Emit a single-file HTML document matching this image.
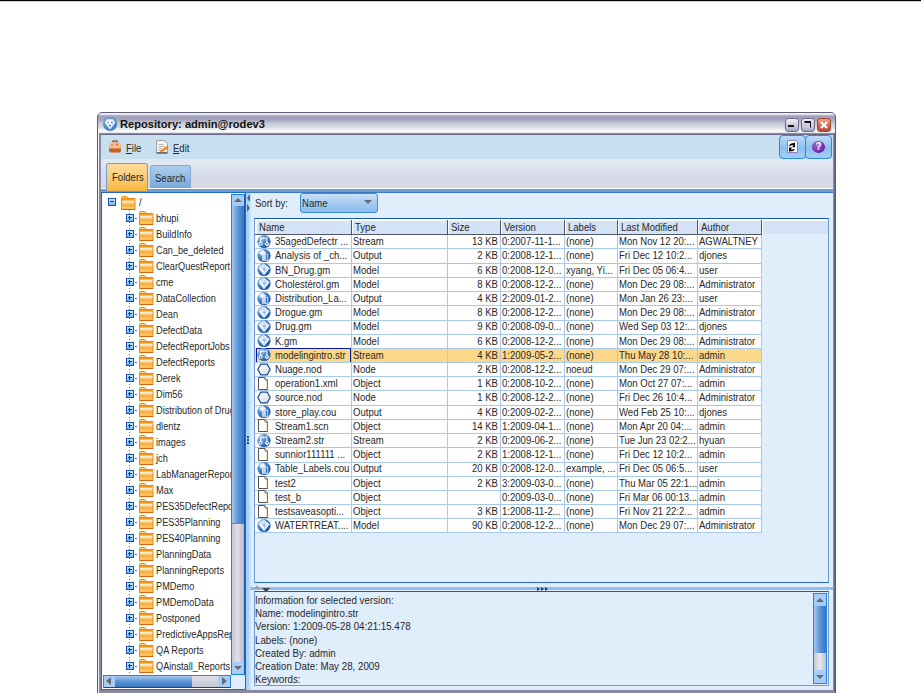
<!DOCTYPE html><html><head><meta charset="utf-8"><style>
*{margin:0;padding:0;box-sizing:border-box}
html,body{width:921px;height:693px;overflow:hidden;background:#fff;position:relative;font-family:"Liberation Sans",sans-serif;font-size:11px;color:#282828}
.a{position:absolute}
.t{position:absolute;white-space:nowrap;line-height:14px;font-size:10px;margin-top:1px;transform-origin:0 0;transform:scaleX(0.955)}
.tt{transform:scaleX(0.92)!important}
.ti{transform:scaleX(0.975)!important}
.tr{position:absolute;white-space:nowrap;line-height:14px;font-size:10px;margin-top:1px;transform-origin:100% 0;transform:scaleX(0.955);text-align:right}
</style></head><body>

<svg width="0" height="0" style="position:absolute"><defs><linearGradient id="fg" x1="0" y1="0" x2="0" y2="1"><stop offset="0" stop-color="#fcb848"/><stop offset=".22" stop-color="#fff8ea"/><stop offset=".42" stop-color="#fdd08a"/><stop offset=".6" stop-color="#f9a63a"/><stop offset=".85" stop-color="#fcd060"/><stop offset="1" stop-color="#fdee98"/></linearGradient><linearGradient id="tg" x1="0" y1="0" x2="0" y2="1"><stop offset="0" stop-color="#fde890"/><stop offset="1" stop-color="#f8b030"/></linearGradient><symbol id="fold" viewBox="0 0 15 14"><path d="M.5 4V1.5Q.5.5 1.5.5H5.5Q6.3.5 6.8 1.5L7.3 2.5" fill="url(#tg)" stroke="#f08c10"/><rect x=".5" y="2.5" width="13.5" height="11" fill="url(#fg)" stroke="#f08a10"/><path d="M1 3.8h12.5" stroke="#fa9a20" stroke-width="1.6"/><path d="M.5 13.3h13.5" stroke="#d85a10" stroke-width="1"/></symbol></defs></svg>
<div class="a" style="left:0;top:0;width:921px;height:1px;background:#000"></div>
<div class="a" style="left:0;top:1px;width:921px;height:1px;background:#d0d0d0"></div>
<div class="a" style="left:97px;top:112px;width:739px;height:600px;background:#8a8aa2;border:1px solid #5c5c78;border-radius:5px 5px 0 0"></div>
<div class="a" style="left:98px;top:113px;width:737px;height:21px;border-radius:4px 4px 0 0;background:linear-gradient(#f4f4f8 0,#f4f4f8 1px,#a29ebb 3px,#a6a6c0 7px,#c4c8d4 10px,#d6dae2 14px,#f4f4f4 17px,#fafafa 18.5px,#e8e8ee 19.5px,#a0a0b8 20.2px,#6a6a88 21px)"></div>
<div class="a" style="left:98px;top:133px;width:1px;height:570px;background:#eeeef4"></div>
<div class="a" style="left:834px;top:133px;width:1px;height:570px;background:#6a6a84"></div>
<div class="a" style="left:101px;top:134px;width:732px;height:1px;background:#6a6a88"></div>
<div class="a" style="left:101px;top:135px;width:732px;height:24px;background:#c8dff0"></div>
<div class="a" style="left:101px;top:159px;width:732px;height:29px;background:linear-gradient(#e0e8f6,#e2e8ee 5px,#dfe0f0 9px,#d8e0ec 13px,#d9dae8 20px,#d8d8e0 29px)"></div>
<div class="a" style="left:101px;top:188px;width:732px;height:1px;background:#fff"></div>
<div class="a" style="left:101px;top:189px;width:732px;height:3px;background:#6c9fd0"></div>
<div class="a" style="left:101px;top:192px;width:732px;height:1px;background:#3a7ac4"></div>
<div class="a" style="left:101px;top:193px;width:732px;height:500px;background:#e0edfb"></div>
<div class="a" style="left:106px;top:163px;width:42px;height:28px;border:1px solid #6a9ed8;border-bottom:none;border-radius:3px 3px 0 0;background:#f0a020"></div>
<div class="a" style="left:107px;top:164px;width:40px;height:27px;border-radius:2px 2px 0 0;background:linear-gradient(#fddc98,#fcd080 40%,#f9bc48 90%,#f4b040)"></div>
<div class="t" style="left:112px;top:169.8px">Folders</div>
<div class="a" style="left:150px;top:165px;width:41px;height:23px;border:1px solid #80aad8;border-bottom:none;border-radius:3px 3px 0 0;background:linear-gradient(#aacdea,#94bce4 50%,#7aa8d8)"></div>
<div class="t" style="left:155px;top:171.2px">Search</div>
<svg class="a" style="left:108px;top:139px" width="14" height="15"><path d="M5 3.5V2h4v1.5" fill="none" stroke="#6a3010" stroke-width="1.2"/><rect x="1" y="3.5" width="12" height="10" rx="2" fill="#f4b884"/><path d="M1 9.5h12v2a2 2 0 0 1-2 2H3a2 2 0 0 1-2-2z" fill="#c0602a"/><rect x="2" y="4.5" width="3" height="3" fill="#fde0c0" opacity=".7"/><circle cx="4" cy="6" r=".8" fill="#d04030"/><circle cx="9" cy="5.5" r=".8" fill="#d04030"/><circle cx="7" cy="8" r=".8" fill="#f0e8e0"/></svg>
<div class="t" style="left:126px;top:140.9px"><u>F</u>ile</div>
<svg class="a" style="left:156px;top:140px" width="13" height="14"><path d="M.5 .5h8l3 3v9h-11z" fill="#f4f4f4" stroke="#a0a0a0"/><path d="M.5 13h11" stroke="#606060" stroke-width="1.5"/><path d="M2.5 4.5h5M2.5 6.5h6M2.5 8.5h3M2.5 10.5h3" stroke="#b8b8b8"/><path d="M4.5 11.5 11.5 7" stroke="#f07010" stroke-width="2.2"/><path d="M5 10.5 11 6.5" stroke="#fcc040" stroke-width=".8"/></svg>
<div class="t" style="left:173px;top:140.9px"><u>E</u>dit</div>
<div class="a" style="left:103px;top:117px;width:14px;height:14px;border-radius:50%;background:radial-gradient(circle at 40% 35%,#8ab8e8,#3a7ac8 70%,#2a5aa8)"></div>
<svg class="a" style="left:103px;top:117px" width="14" height="14"><path d="M4 2.2H10L12.3 5.5 7 12.5 1.8 5.5z" fill="#fff" fill-opacity=".92"/><circle cx="5" cy="5.5" r="1" fill="#7aa8e0"/><circle cx="9" cy="5.5" r="1" fill="#5a90d0"/><circle cx="7" cy="8.6" r="1.1" fill="#4a84cc"/></svg>
<div class="a" style="left:120px;top:116.8px;font-weight:bold;font-size:11.5px;white-space:nowrap;line-height:14px;color:#111;transform-origin:0 0;transform:scaleX(0.967)">Repository: admin@rodev3</div>
<div class="a" style="left:785px;top:118px;width:14px;height:14px;border:1px solid #6c6c88;border-radius:3px;background:linear-gradient(#eeeef6,#c8c8d8 60%,#a8a8c0)"></div>
<div class="a" style="left:801px;top:118px;width:14px;height:14px;border:1px solid #6c6c88;border-radius:3px;background:linear-gradient(#eeeef6,#c8c8d8 60%,#a8a8c0)"></div>
<div class="a" style="left:788px;top:125px;width:6px;height:2px;background:#111"></div>
<div class="a" style="left:804px;top:121px;width:7px;height:7px;border-top:2px solid #111;border-right:1.5px solid #111;border-left:1px solid #c8c8d8;border-bottom:1px solid #c8c8d8"></div>
<div class="a" style="left:817px;top:118px;width:14px;height:14px;border:1px solid #a04830;border-radius:3px;background:linear-gradient(#f0a080,#d86848 60%,#b04838)"></div>
<svg class="a" style="left:817px;top:118px" width="14" height="14"><path d="M4 4 10 10M10 4 4 10" stroke="#fff" stroke-width="2.2"/></svg>
<div class="a" style="left:779px;top:135px;width:27px;height:24px;border:1px solid #2a88e0;border-radius:4px;background:linear-gradient(#bcdaf8,#8cc0f0 55%,#a4cef6)"></div>
<div class="a" style="left:805px;top:135px;width:27px;height:24px;border:1px solid #2a88e0;border-radius:4px;background:linear-gradient(#bcdaf8,#8cc0f0 55%,#a4cef6)"></div>
<svg class="a" style="left:787px;top:140px" width="11" height="13"><path d="M.5 .5h8.5l1.5 1.5v10.5h-10z" fill="#fff" stroke="#8a80b8"/><path d="M2 6.2Q2.6 3.4 5.8 3.3L8 2.6V7.2H5.2L6.6 5.6Q4.2 4.8 2.6 6.6z" fill="#000"/><path d="M2 7.6H5L3.8 9.4Q6.2 9.8 7.8 8.8Q7.6 11.6 4.6 11.2L2 11.6z" fill="#000"/></svg>
<div class="a" style="left:812px;top:141px;width:13px;height:12px;border-radius:50%;background:radial-gradient(circle at 40% 35%,#a070d8,#6a20a8 70%,#501888)"></div>
<div class="a" style="left:812px;top:140px;width:13px;height:13px;color:#fff;font-weight:bold;font-size:10px;line-height:13px;text-align:center">?</div>
<div class="a" style="left:99px;top:193px;width:2px;height:500px;background:#8888a0"></div>
<div class="a" style="left:101px;top:192px;width:145px;height:498px;border:1px solid #1a6ad0;background:#fff"></div>
<div class="a" style="left:102px;top:193px;width:129px;height:482px;overflow:hidden">
<div class="a" style="left:-102px;top:-193px;width:921px;height:693px">
<div class="a" style="left:108px;top:198px;width:8px;height:8px;border:1px solid #1a50b0;background:linear-gradient(#d0e8fc,#7ab8f8)"></div><div class="a" style="left:110px;top:201px;width:4px;height:1px;background:#1a3a90"></div>
<svg class="a" style="left:121px;top:196px" width="15" height="14"><use href="#fold"/></svg>
<div class="t" style="left:139px;top:195px">/</div>
<div class="a" style="left:129px;top:210px;width:1px;height:465px;background:repeating-linear-gradient(#3a7ad8 0,#3a7ad8 1px,transparent 1px,transparent 3px)"></div>
<div class="a" style="left:126px;top:214px;width:8px;height:8px;border:1px solid #1a50b0;background:linear-gradient(#d0e8fc,#7ab8f8)"></div><div class="a" style="left:128px;top:217px;width:4px;height:1px;background:#1a3a90"></div><div class="a" style="left:129px;top:216px;width:1px;height:4px;background:#1a3a90"></div>
<div class="a" style="left:135px;top:218px;width:2px;height:1px;background:#3a7ad8"></div>
<svg class="a" style="left:139px;top:211px" width="15" height="14"><use href="#fold"/></svg>
<div class="t tt" style="left:156px;top:210.9px">bhupi</div>
<div class="a" style="left:126px;top:230px;width:8px;height:8px;border:1px solid #1a50b0;background:linear-gradient(#d0e8fc,#7ab8f8)"></div><div class="a" style="left:128px;top:233px;width:4px;height:1px;background:#1a3a90"></div><div class="a" style="left:129px;top:232px;width:1px;height:4px;background:#1a3a90"></div>
<div class="a" style="left:135px;top:234px;width:2px;height:1px;background:#3a7ad8"></div>
<svg class="a" style="left:139px;top:227px" width="15" height="14"><use href="#fold"/></svg>
<div class="t tt" style="left:156px;top:226.9px">BuildInfo</div>
<div class="a" style="left:126px;top:246px;width:8px;height:8px;border:1px solid #1a50b0;background:linear-gradient(#d0e8fc,#7ab8f8)"></div><div class="a" style="left:128px;top:249px;width:4px;height:1px;background:#1a3a90"></div><div class="a" style="left:129px;top:248px;width:1px;height:4px;background:#1a3a90"></div>
<div class="a" style="left:135px;top:250px;width:2px;height:1px;background:#3a7ad8"></div>
<svg class="a" style="left:139px;top:243px" width="15" height="14"><use href="#fold"/></svg>
<div class="t tt" style="left:156px;top:242.9px">Can_be_deleted</div>
<div class="a" style="left:126px;top:262px;width:8px;height:8px;border:1px solid #1a50b0;background:linear-gradient(#d0e8fc,#7ab8f8)"></div><div class="a" style="left:128px;top:265px;width:4px;height:1px;background:#1a3a90"></div><div class="a" style="left:129px;top:264px;width:1px;height:4px;background:#1a3a90"></div>
<div class="a" style="left:135px;top:266px;width:2px;height:1px;background:#3a7ad8"></div>
<svg class="a" style="left:139px;top:259px" width="15" height="14"><use href="#fold"/></svg>
<div class="t tt" style="left:156px;top:258.9px">ClearQuestReport</div>
<div class="a" style="left:126px;top:278px;width:8px;height:8px;border:1px solid #1a50b0;background:linear-gradient(#d0e8fc,#7ab8f8)"></div><div class="a" style="left:128px;top:281px;width:4px;height:1px;background:#1a3a90"></div><div class="a" style="left:129px;top:280px;width:1px;height:4px;background:#1a3a90"></div>
<div class="a" style="left:135px;top:282px;width:2px;height:1px;background:#3a7ad8"></div>
<svg class="a" style="left:139px;top:275px" width="15" height="14"><use href="#fold"/></svg>
<div class="t tt" style="left:156px;top:274.9px">cme</div>
<div class="a" style="left:126px;top:294px;width:8px;height:8px;border:1px solid #1a50b0;background:linear-gradient(#d0e8fc,#7ab8f8)"></div><div class="a" style="left:128px;top:297px;width:4px;height:1px;background:#1a3a90"></div><div class="a" style="left:129px;top:296px;width:1px;height:4px;background:#1a3a90"></div>
<div class="a" style="left:135px;top:298px;width:2px;height:1px;background:#3a7ad8"></div>
<svg class="a" style="left:139px;top:291px" width="15" height="14"><use href="#fold"/></svg>
<div class="t tt" style="left:156px;top:290.9px">DataCollection</div>
<div class="a" style="left:126px;top:310px;width:8px;height:8px;border:1px solid #1a50b0;background:linear-gradient(#d0e8fc,#7ab8f8)"></div><div class="a" style="left:128px;top:313px;width:4px;height:1px;background:#1a3a90"></div><div class="a" style="left:129px;top:312px;width:1px;height:4px;background:#1a3a90"></div>
<div class="a" style="left:135px;top:314px;width:2px;height:1px;background:#3a7ad8"></div>
<svg class="a" style="left:139px;top:307px" width="15" height="14"><use href="#fold"/></svg>
<div class="t tt" style="left:156px;top:306.9px">Dean</div>
<div class="a" style="left:126px;top:326px;width:8px;height:8px;border:1px solid #1a50b0;background:linear-gradient(#d0e8fc,#7ab8f8)"></div><div class="a" style="left:128px;top:329px;width:4px;height:1px;background:#1a3a90"></div><div class="a" style="left:129px;top:328px;width:1px;height:4px;background:#1a3a90"></div>
<div class="a" style="left:135px;top:330px;width:2px;height:1px;background:#3a7ad8"></div>
<svg class="a" style="left:139px;top:323px" width="15" height="14"><use href="#fold"/></svg>
<div class="t tt" style="left:156px;top:322.9px">DefectData</div>
<div class="a" style="left:126px;top:342px;width:8px;height:8px;border:1px solid #1a50b0;background:linear-gradient(#d0e8fc,#7ab8f8)"></div><div class="a" style="left:128px;top:345px;width:4px;height:1px;background:#1a3a90"></div><div class="a" style="left:129px;top:344px;width:1px;height:4px;background:#1a3a90"></div>
<div class="a" style="left:135px;top:346px;width:2px;height:1px;background:#3a7ad8"></div>
<svg class="a" style="left:139px;top:339px" width="15" height="14"><use href="#fold"/></svg>
<div class="t tt" style="left:156px;top:338.9px">DefectReportJobs</div>
<div class="a" style="left:126px;top:358px;width:8px;height:8px;border:1px solid #1a50b0;background:linear-gradient(#d0e8fc,#7ab8f8)"></div><div class="a" style="left:128px;top:361px;width:4px;height:1px;background:#1a3a90"></div><div class="a" style="left:129px;top:360px;width:1px;height:4px;background:#1a3a90"></div>
<div class="a" style="left:135px;top:362px;width:2px;height:1px;background:#3a7ad8"></div>
<svg class="a" style="left:139px;top:355px" width="15" height="14"><use href="#fold"/></svg>
<div class="t tt" style="left:156px;top:354.9px">DefectReports</div>
<div class="a" style="left:126px;top:374px;width:8px;height:8px;border:1px solid #1a50b0;background:linear-gradient(#d0e8fc,#7ab8f8)"></div><div class="a" style="left:128px;top:377px;width:4px;height:1px;background:#1a3a90"></div><div class="a" style="left:129px;top:376px;width:1px;height:4px;background:#1a3a90"></div>
<div class="a" style="left:135px;top:378px;width:2px;height:1px;background:#3a7ad8"></div>
<svg class="a" style="left:139px;top:371px" width="15" height="14"><use href="#fold"/></svg>
<div class="t tt" style="left:156px;top:370.9px">Derek</div>
<div class="a" style="left:126px;top:390px;width:8px;height:8px;border:1px solid #1a50b0;background:linear-gradient(#d0e8fc,#7ab8f8)"></div><div class="a" style="left:128px;top:393px;width:4px;height:1px;background:#1a3a90"></div><div class="a" style="left:129px;top:392px;width:1px;height:4px;background:#1a3a90"></div>
<div class="a" style="left:135px;top:394px;width:2px;height:1px;background:#3a7ad8"></div>
<svg class="a" style="left:139px;top:387px" width="15" height="14"><use href="#fold"/></svg>
<div class="t tt" style="left:156px;top:386.9px">Dim56</div>
<div class="a" style="left:126px;top:406px;width:8px;height:8px;border:1px solid #1a50b0;background:linear-gradient(#d0e8fc,#7ab8f8)"></div><div class="a" style="left:128px;top:409px;width:4px;height:1px;background:#1a3a90"></div><div class="a" style="left:129px;top:408px;width:1px;height:4px;background:#1a3a90"></div>
<div class="a" style="left:135px;top:410px;width:2px;height:1px;background:#3a7ad8"></div>
<svg class="a" style="left:139px;top:403px" width="15" height="14"><use href="#fold"/></svg>
<div class="t tt" style="left:156px;top:402.9px">Distribution of Drug</div>
<div class="a" style="left:126px;top:422px;width:8px;height:8px;border:1px solid #1a50b0;background:linear-gradient(#d0e8fc,#7ab8f8)"></div><div class="a" style="left:128px;top:425px;width:4px;height:1px;background:#1a3a90"></div><div class="a" style="left:129px;top:424px;width:1px;height:4px;background:#1a3a90"></div>
<div class="a" style="left:135px;top:426px;width:2px;height:1px;background:#3a7ad8"></div>
<svg class="a" style="left:139px;top:419px" width="15" height="14"><use href="#fold"/></svg>
<div class="t tt" style="left:156px;top:418.9px">dlentz</div>
<div class="a" style="left:126px;top:438px;width:8px;height:8px;border:1px solid #1a50b0;background:linear-gradient(#d0e8fc,#7ab8f8)"></div><div class="a" style="left:128px;top:441px;width:4px;height:1px;background:#1a3a90"></div><div class="a" style="left:129px;top:440px;width:1px;height:4px;background:#1a3a90"></div>
<div class="a" style="left:135px;top:442px;width:2px;height:1px;background:#3a7ad8"></div>
<svg class="a" style="left:139px;top:435px" width="15" height="14"><use href="#fold"/></svg>
<div class="t tt" style="left:156px;top:434.9px">images</div>
<div class="a" style="left:126px;top:454px;width:8px;height:8px;border:1px solid #1a50b0;background:linear-gradient(#d0e8fc,#7ab8f8)"></div><div class="a" style="left:128px;top:457px;width:4px;height:1px;background:#1a3a90"></div><div class="a" style="left:129px;top:456px;width:1px;height:4px;background:#1a3a90"></div>
<div class="a" style="left:135px;top:458px;width:2px;height:1px;background:#3a7ad8"></div>
<svg class="a" style="left:139px;top:451px" width="15" height="14"><use href="#fold"/></svg>
<div class="t tt" style="left:156px;top:450.9px">jch</div>
<div class="a" style="left:126px;top:470px;width:8px;height:8px;border:1px solid #1a50b0;background:linear-gradient(#d0e8fc,#7ab8f8)"></div><div class="a" style="left:128px;top:473px;width:4px;height:1px;background:#1a3a90"></div><div class="a" style="left:129px;top:472px;width:1px;height:4px;background:#1a3a90"></div>
<div class="a" style="left:135px;top:474px;width:2px;height:1px;background:#3a7ad8"></div>
<svg class="a" style="left:139px;top:467px" width="15" height="14"><use href="#fold"/></svg>
<div class="t tt" style="left:156px;top:466.9px">LabManagerReports</div>
<div class="a" style="left:126px;top:486px;width:8px;height:8px;border:1px solid #1a50b0;background:linear-gradient(#d0e8fc,#7ab8f8)"></div><div class="a" style="left:128px;top:489px;width:4px;height:1px;background:#1a3a90"></div><div class="a" style="left:129px;top:488px;width:1px;height:4px;background:#1a3a90"></div>
<div class="a" style="left:135px;top:490px;width:2px;height:1px;background:#3a7ad8"></div>
<svg class="a" style="left:139px;top:483px" width="15" height="14"><use href="#fold"/></svg>
<div class="t tt" style="left:156px;top:482.9px">Max</div>
<div class="a" style="left:126px;top:502px;width:8px;height:8px;border:1px solid #1a50b0;background:linear-gradient(#d0e8fc,#7ab8f8)"></div><div class="a" style="left:128px;top:505px;width:4px;height:1px;background:#1a3a90"></div><div class="a" style="left:129px;top:504px;width:1px;height:4px;background:#1a3a90"></div>
<div class="a" style="left:135px;top:506px;width:2px;height:1px;background:#3a7ad8"></div>
<svg class="a" style="left:139px;top:499px" width="15" height="14"><use href="#fold"/></svg>
<div class="t tt" style="left:156px;top:498.9px">PES35DefectReports</div>
<div class="a" style="left:126px;top:518px;width:8px;height:8px;border:1px solid #1a50b0;background:linear-gradient(#d0e8fc,#7ab8f8)"></div><div class="a" style="left:128px;top:521px;width:4px;height:1px;background:#1a3a90"></div><div class="a" style="left:129px;top:520px;width:1px;height:4px;background:#1a3a90"></div>
<div class="a" style="left:135px;top:522px;width:2px;height:1px;background:#3a7ad8"></div>
<svg class="a" style="left:139px;top:515px" width="15" height="14"><use href="#fold"/></svg>
<div class="t tt" style="left:156px;top:514.9px">PES35Planning</div>
<div class="a" style="left:126px;top:534px;width:8px;height:8px;border:1px solid #1a50b0;background:linear-gradient(#d0e8fc,#7ab8f8)"></div><div class="a" style="left:128px;top:537px;width:4px;height:1px;background:#1a3a90"></div><div class="a" style="left:129px;top:536px;width:1px;height:4px;background:#1a3a90"></div>
<div class="a" style="left:135px;top:538px;width:2px;height:1px;background:#3a7ad8"></div>
<svg class="a" style="left:139px;top:531px" width="15" height="14"><use href="#fold"/></svg>
<div class="t tt" style="left:156px;top:530.9px">PES40Planning</div>
<div class="a" style="left:126px;top:550px;width:8px;height:8px;border:1px solid #1a50b0;background:linear-gradient(#d0e8fc,#7ab8f8)"></div><div class="a" style="left:128px;top:553px;width:4px;height:1px;background:#1a3a90"></div><div class="a" style="left:129px;top:552px;width:1px;height:4px;background:#1a3a90"></div>
<div class="a" style="left:135px;top:554px;width:2px;height:1px;background:#3a7ad8"></div>
<svg class="a" style="left:139px;top:547px" width="15" height="14"><use href="#fold"/></svg>
<div class="t tt" style="left:156px;top:546.9px">PlanningData</div>
<div class="a" style="left:126px;top:566px;width:8px;height:8px;border:1px solid #1a50b0;background:linear-gradient(#d0e8fc,#7ab8f8)"></div><div class="a" style="left:128px;top:569px;width:4px;height:1px;background:#1a3a90"></div><div class="a" style="left:129px;top:568px;width:1px;height:4px;background:#1a3a90"></div>
<div class="a" style="left:135px;top:570px;width:2px;height:1px;background:#3a7ad8"></div>
<svg class="a" style="left:139px;top:563px" width="15" height="14"><use href="#fold"/></svg>
<div class="t tt" style="left:156px;top:562.9px">PlanningReports</div>
<div class="a" style="left:126px;top:582px;width:8px;height:8px;border:1px solid #1a50b0;background:linear-gradient(#d0e8fc,#7ab8f8)"></div><div class="a" style="left:128px;top:585px;width:4px;height:1px;background:#1a3a90"></div><div class="a" style="left:129px;top:584px;width:1px;height:4px;background:#1a3a90"></div>
<div class="a" style="left:135px;top:586px;width:2px;height:1px;background:#3a7ad8"></div>
<svg class="a" style="left:139px;top:579px" width="15" height="14"><use href="#fold"/></svg>
<div class="t tt" style="left:156px;top:578.9px">PMDemo</div>
<div class="a" style="left:126px;top:598px;width:8px;height:8px;border:1px solid #1a50b0;background:linear-gradient(#d0e8fc,#7ab8f8)"></div><div class="a" style="left:128px;top:601px;width:4px;height:1px;background:#1a3a90"></div><div class="a" style="left:129px;top:600px;width:1px;height:4px;background:#1a3a90"></div>
<div class="a" style="left:135px;top:602px;width:2px;height:1px;background:#3a7ad8"></div>
<svg class="a" style="left:139px;top:595px" width="15" height="14"><use href="#fold"/></svg>
<div class="t tt" style="left:156px;top:594.9px">PMDemoData</div>
<div class="a" style="left:126px;top:614px;width:8px;height:8px;border:1px solid #1a50b0;background:linear-gradient(#d0e8fc,#7ab8f8)"></div><div class="a" style="left:128px;top:617px;width:4px;height:1px;background:#1a3a90"></div><div class="a" style="left:129px;top:616px;width:1px;height:4px;background:#1a3a90"></div>
<div class="a" style="left:135px;top:618px;width:2px;height:1px;background:#3a7ad8"></div>
<svg class="a" style="left:139px;top:611px" width="15" height="14"><use href="#fold"/></svg>
<div class="t tt" style="left:156px;top:610.9px">Postponed</div>
<div class="a" style="left:126px;top:630px;width:8px;height:8px;border:1px solid #1a50b0;background:linear-gradient(#d0e8fc,#7ab8f8)"></div><div class="a" style="left:128px;top:633px;width:4px;height:1px;background:#1a3a90"></div><div class="a" style="left:129px;top:632px;width:1px;height:4px;background:#1a3a90"></div>
<div class="a" style="left:135px;top:634px;width:2px;height:1px;background:#3a7ad8"></div>
<svg class="a" style="left:139px;top:627px" width="15" height="14"><use href="#fold"/></svg>
<div class="t tt" style="left:156px;top:626.9px">PredictiveAppsReports</div>
<div class="a" style="left:126px;top:646px;width:8px;height:8px;border:1px solid #1a50b0;background:linear-gradient(#d0e8fc,#7ab8f8)"></div><div class="a" style="left:128px;top:649px;width:4px;height:1px;background:#1a3a90"></div><div class="a" style="left:129px;top:648px;width:1px;height:4px;background:#1a3a90"></div>
<div class="a" style="left:135px;top:650px;width:2px;height:1px;background:#3a7ad8"></div>
<svg class="a" style="left:139px;top:643px" width="15" height="14"><use href="#fold"/></svg>
<div class="t tt" style="left:156px;top:642.9px">QA Reports</div>
<div class="a" style="left:126px;top:662px;width:8px;height:8px;border:1px solid #1a50b0;background:linear-gradient(#d0e8fc,#7ab8f8)"></div><div class="a" style="left:128px;top:665px;width:4px;height:1px;background:#1a3a90"></div><div class="a" style="left:129px;top:664px;width:1px;height:4px;background:#1a3a90"></div>
<div class="a" style="left:135px;top:666px;width:2px;height:1px;background:#3a7ad8"></div>
<svg class="a" style="left:139px;top:659px" width="15" height="14"><use href="#fold"/></svg>
<div class="t tt" style="left:156px;top:658.9px">QAinstall_Reports</div>
</div></div>
<div class="a" style="left:231px;top:194px;width:14px;height:481px;border:1px solid #1a80f0;border-right-color:#1a58b0;background:#d0d0da"></div>
<div class="a" style="left:232px;top:195px;width:12px;height:11px;background:#a8ccf8"></div>
<div class="a" style="left:234px;top:198px;width:0;height:0;border-left:4px solid transparent;border-right:4px solid transparent;border-bottom:4px solid #686870"></div>
<div class="a" style="left:232px;top:206px;width:12px;height:318px;background:linear-gradient(90deg,#a8c8ee,#5a94d8 50%,#3a74c0)"></div>
<div class="a" style="left:232px;top:523px;width:12px;height:1px;background:#3a90f0"></div>
<div class="a" style="left:232px;top:524px;width:12px;height:138px;background:linear-gradient(90deg,#c8c8d4,#e0e0ea 50%,#b8b8c8)"></div>
<div class="a" style="left:232px;top:662px;width:12px;height:12px;background:#a8ccf8"></div>
<div class="a" style="left:234px;top:666px;width:0;height:0;border-left:4px solid transparent;border-right:4px solid transparent;border-top:4px solid #686870"></div>
<div class="a" style="left:231px;top:675px;width:14px;height:14px;background:#e0edfb"></div>
<div class="a" style="left:103px;top:675px;width:128px;height:13px;border:1px solid #2a80e8;border-bottom-color:#0a4aa0;background:#d0d0da"></div>
<div class="a" style="left:104px;top:676px;width:11px;height:11px;background:#a8ccf8"></div>
<div class="a" style="left:106px;top:677px;width:0;height:0;border-top:4px solid transparent;border-bottom:4px solid transparent;border-right:5px solid #686870"></div>
<div class="a" style="left:115px;top:676px;width:77px;height:11px;background:linear-gradient(#a8c8ee,#5a94d8 50%,#3a74c0)"></div>
<div class="a" style="left:192px;top:676px;width:26px;height:11px;background:linear-gradient(#e0e0ea,#c8c8d4)"></div>
<div class="a" style="left:218px;top:676px;width:12px;height:11px;background:#a8ccf8"></div>
<div class="a" style="left:222px;top:677px;width:0;height:0;border-top:4px solid transparent;border-bottom:4px solid transparent;border-left:5px solid #686870"></div>
<div class="a" style="left:246px;top:193px;width:3px;height:497px;background:#a8d0f8"></div>
<div class="a" style="left:249px;top:193px;width:2px;height:497px;background:#c8e2fc"></div>
<div class="a" style="left:247px;top:194px;width:0;height:0;border-top:4px solid transparent;border-bottom:4px solid transparent;border-right:3px solid #606070"></div>
<div class="a" style="left:247px;top:204px;width:0;height:0;border-top:4px solid transparent;border-bottom:4px solid transparent;border-left:3px solid #606070"></div>
<div class="a" style="left:247px;top:436px;width:2px;height:2px;background:#1a4aa0"></div>
<div class="a" style="left:247px;top:439px;width:2px;height:2px;background:#1a4aa0"></div>
<div class="a" style="left:247px;top:442px;width:2px;height:2px;background:#1a4aa0"></div>
<div class="t" style="left:255px;top:196.2px">Sort by:</div>
<div class="a" style="left:300px;top:193px;width:78px;height:20px;border:1px solid #3a8ae0;border-radius:3px;background:linear-gradient(#c8e0f8,#a0c8f0 60%,#90bcec)"></div>
<div class="t" style="left:302px;top:196.2px">Name</div>
<div class="a" style="left:364px;top:200px;width:0;height:0;border-left:4px solid transparent;border-right:4px solid transparent;border-top:4px solid #686870"></div>
<div class="a" style="left:254px;top:218px;width:575px;height:365px;border:1px solid #6a9ee0;border-top-color:#1a5ab8;border-bottom-color:#2a6ac8"></div>
<div class="a" style="left:255px;top:219px;width:573px;height:15px;background:#fff"></div>
<div class="a" style="left:257px;top:221px;width:571px;height:13px;background:#d4e2f6"></div>
<div class="a" style="left:255px;top:234px;width:506px;height:1px;background:#505868"></div>
<div class="t" style="left:259px;top:219.9px">Name</div>
<div class="a" style="left:351px;top:220px;width:1px;height:15px;background:#505868"></div><div class="a" style="left:352px;top:221px;width:1px;height:13px;background:#fff"></div>
<div class="t" style="left:355px;top:219.9px">Type</div>
<div class="a" style="left:447px;top:220px;width:1px;height:15px;background:#505868"></div><div class="a" style="left:448px;top:221px;width:1px;height:13px;background:#fff"></div>
<div class="t" style="left:451px;top:219.9px">Size</div>
<div class="a" style="left:500px;top:220px;width:1px;height:15px;background:#505868"></div><div class="a" style="left:501px;top:221px;width:1px;height:13px;background:#fff"></div>
<div class="t" style="left:504px;top:219.9px">Version</div>
<div class="a" style="left:564px;top:220px;width:1px;height:15px;background:#505868"></div><div class="a" style="left:565px;top:221px;width:1px;height:13px;background:#fff"></div>
<div class="t" style="left:568px;top:219.9px">Labels</div>
<div class="a" style="left:617px;top:220px;width:1px;height:15px;background:#505868"></div><div class="a" style="left:618px;top:221px;width:1px;height:13px;background:#fff"></div>
<div class="t" style="left:621px;top:219.9px">Last Modified</div>
<div class="a" style="left:697px;top:220px;width:1px;height:15px;background:#505868"></div><div class="a" style="left:698px;top:221px;width:1px;height:13px;background:#fff"></div>
<div class="t" style="left:701px;top:219.9px">Author</div>
<div class="a" style="left:761px;top:220px;width:1px;height:15px;background:#505868"></div><div class="a" style="left:762px;top:221px;width:1px;height:13px;background:#fff"></div>
<div class="a" style="left:255px;top:235px;width:506px;height:298px;background:#fff"></div>
<div class="a" style="left:255px;top:248px;width:506px;height:1px;background:#a8c8ec"></div>

<svg class="a" style="left:257px;top:234.8px" width="14" height="14" viewBox="0 0 14 14"><defs><radialGradient id="gstream" cx="30%" cy="25%" r="80%"><stop offset="0" stop-color="#b0d4f6"/><stop offset=".45" stop-color="#4a88d0"/><stop offset="1" stop-color="#1a58a8"/></radialGradient></defs><g transform="translate(7 6.6) scale(.95 .93) translate(-7 -7)"><circle cx="7" cy="7" r="7" fill="url(#gstream)"/><path d="M3.3 7.5V4.2Q3.3 3.3 4.2 3.3H8.8M10 1.8v5.8" stroke="#fff" fill="none" stroke-width="1.1"/><circle cx="3.5" cy="9.3" r="1.7" fill="none" stroke="#fff" stroke-width="1.1"/><path d="M10.2 7.6l1.9 1.9-1.9 1.9-1.9-1.9z" fill="none" stroke="#fff" stroke-width="1.1"/></g></svg>
<div class="t" style="left:275px;top:234.1px">35agedDefectr ...</div>
<div class="t" style="left:353px;top:234.1px">Stream</div>
<div class="tr" style="left:438px;width:60px;top:234.1px">13 KB</div>
<div class="t" style="left:502px;top:234.1px">0:2007-11-1...</div>
<div class="t" style="left:566px;top:234.1px">(none)</div>
<div class="t" style="left:619px;top:234.1px">Mon Nov 12 20:...</div>
<div class="t" style="left:699px;top:234.1px">AGWALTNEY</div>
<div class="a" style="left:255px;top:263px;width:506px;height:1px;background:#a8c8ec"></div>

<svg class="a" style="left:257px;top:249.0px" width="14" height="14" viewBox="0 0 14 14"><defs><radialGradient id="goutput" cx="30%" cy="25%" r="80%"><stop offset="0" stop-color="#b0d4f6"/><stop offset=".45" stop-color="#4a88d0"/><stop offset="1" stop-color="#1a58a8"/></radialGradient></defs><g transform="translate(7 6.6) scale(.95 .93) translate(-7 -7)"><circle cx="7" cy="7" r="7" fill="url(#goutput)"/><path d="M5.5 .8 9.3 4 5.5 7.5 1.8 4z" fill="#fff" fill-opacity=".85"/><rect x="5.5" y="5.5" width="5.5" height="6.5" fill="#a8c8ec" stroke="#e8f2fc" stroke-width=".8"/><path d="M9.8 6v5.5" stroke="#2a68b8" stroke-width="1.2"/><path d="M6.5 7.5h2M6.5 9.5h1.5" stroke="#fff" stroke-width=".8"/></g></svg>
<div class="t" style="left:275px;top:248.3px">Analysis of _ch...</div>
<div class="t" style="left:353px;top:248.3px">Output</div>
<div class="tr" style="left:438px;width:60px;top:248.3px">2 KB</div>
<div class="t" style="left:502px;top:248.3px">0:2008-12-1...</div>
<div class="t" style="left:566px;top:248.3px">(none)</div>
<div class="t" style="left:619px;top:248.3px">Fri Dec 12 10:2...</div>
<div class="t" style="left:699px;top:248.3px">djones</div>
<div class="a" style="left:255px;top:277px;width:506px;height:1px;background:#a8c8ec"></div>

<svg class="a" style="left:257px;top:263.2px" width="14" height="14" viewBox="0 0 14 14"><defs><radialGradient id="gmodel" cx="30%" cy="25%" r="80%"><stop offset="0" stop-color="#b0d4f6"/><stop offset=".45" stop-color="#4a88d0"/><stop offset="1" stop-color="#1a58a8"/></radialGradient></defs><g transform="translate(7 6.6) scale(.95 .93) translate(-7 -7)"><circle cx="7" cy="7" r="7" fill="url(#gmodel)"/><path d="M6.6 1.2 12.4 5.6 7 12.4 1.8 5.6z" fill="#e8f2fc" stroke="#fff" stroke-width="1"/><path d="M4 5.5 6.6 3 9.5 5.5 7 10" fill="none" stroke="#90b8e8" stroke-width=".9"/><circle cx="7" cy="6.5" r="1" fill="#5a90d0"/></g></svg>
<div class="t" style="left:275px;top:262.5px">BN_Drug.gm</div>
<div class="t" style="left:353px;top:262.5px">Model</div>
<div class="tr" style="left:438px;width:60px;top:262.5px">6 KB</div>
<div class="t" style="left:502px;top:262.5px">0:2008-12-0...</div>
<div class="t" style="left:566px;top:262.5px">xyang, Yi...</div>
<div class="t" style="left:619px;top:262.5px">Fri Dec 05 06:4...</div>
<div class="t" style="left:699px;top:262.5px">user</div>
<div class="a" style="left:255px;top:291px;width:506px;height:1px;background:#a8c8ec"></div>

<svg class="a" style="left:257px;top:277.4px" width="14" height="14" viewBox="0 0 14 14"><defs><radialGradient id="gmodel" cx="30%" cy="25%" r="80%"><stop offset="0" stop-color="#b0d4f6"/><stop offset=".45" stop-color="#4a88d0"/><stop offset="1" stop-color="#1a58a8"/></radialGradient></defs><g transform="translate(7 6.6) scale(.95 .93) translate(-7 -7)"><circle cx="7" cy="7" r="7" fill="url(#gmodel)"/><path d="M6.6 1.2 12.4 5.6 7 12.4 1.8 5.6z" fill="#e8f2fc" stroke="#fff" stroke-width="1"/><path d="M4 5.5 6.6 3 9.5 5.5 7 10" fill="none" stroke="#90b8e8" stroke-width=".9"/><circle cx="7" cy="6.5" r="1" fill="#5a90d0"/></g></svg>
<div class="t" style="left:275px;top:276.7px">Cholestérol.gm</div>
<div class="t" style="left:353px;top:276.7px">Model</div>
<div class="tr" style="left:438px;width:60px;top:276.7px">8 KB</div>
<div class="t" style="left:502px;top:276.7px">0:2008-12-2...</div>
<div class="t" style="left:566px;top:276.7px">(none)</div>
<div class="t" style="left:619px;top:276.7px">Mon Dec 29 08:...</div>
<div class="t" style="left:699px;top:276.7px">Administrator</div>
<div class="a" style="left:255px;top:305px;width:506px;height:1px;background:#a8c8ec"></div>

<svg class="a" style="left:257px;top:291.6px" width="14" height="14" viewBox="0 0 14 14"><defs><radialGradient id="goutput" cx="30%" cy="25%" r="80%"><stop offset="0" stop-color="#b0d4f6"/><stop offset=".45" stop-color="#4a88d0"/><stop offset="1" stop-color="#1a58a8"/></radialGradient></defs><g transform="translate(7 6.6) scale(.95 .93) translate(-7 -7)"><circle cx="7" cy="7" r="7" fill="url(#goutput)"/><path d="M5.5 .8 9.3 4 5.5 7.5 1.8 4z" fill="#fff" fill-opacity=".85"/><rect x="5.5" y="5.5" width="5.5" height="6.5" fill="#a8c8ec" stroke="#e8f2fc" stroke-width=".8"/><path d="M9.8 6v5.5" stroke="#2a68b8" stroke-width="1.2"/><path d="M6.5 7.5h2M6.5 9.5h1.5" stroke="#fff" stroke-width=".8"/></g></svg>
<div class="t" style="left:275px;top:290.9px">Distribution_La...</div>
<div class="t" style="left:353px;top:290.9px">Output</div>
<div class="tr" style="left:438px;width:60px;top:290.9px">4 KB</div>
<div class="t" style="left:502px;top:290.9px">2:2009-01-2...</div>
<div class="t" style="left:566px;top:290.9px">(none)</div>
<div class="t" style="left:619px;top:290.9px">Mon Jan 26 23:...</div>
<div class="t" style="left:699px;top:290.9px">user</div>
<div class="a" style="left:255px;top:320px;width:506px;height:1px;background:#a8c8ec"></div>

<svg class="a" style="left:257px;top:305.8px" width="14" height="14" viewBox="0 0 14 14"><defs><radialGradient id="gmodel" cx="30%" cy="25%" r="80%"><stop offset="0" stop-color="#b0d4f6"/><stop offset=".45" stop-color="#4a88d0"/><stop offset="1" stop-color="#1a58a8"/></radialGradient></defs><g transform="translate(7 6.6) scale(.95 .93) translate(-7 -7)"><circle cx="7" cy="7" r="7" fill="url(#gmodel)"/><path d="M6.6 1.2 12.4 5.6 7 12.4 1.8 5.6z" fill="#e8f2fc" stroke="#fff" stroke-width="1"/><path d="M4 5.5 6.6 3 9.5 5.5 7 10" fill="none" stroke="#90b8e8" stroke-width=".9"/><circle cx="7" cy="6.5" r="1" fill="#5a90d0"/></g></svg>
<div class="t" style="left:275px;top:305.1px">Drogue.gm</div>
<div class="t" style="left:353px;top:305.1px">Model</div>
<div class="tr" style="left:438px;width:60px;top:305.1px">8 KB</div>
<div class="t" style="left:502px;top:305.1px">0:2008-12-2...</div>
<div class="t" style="left:566px;top:305.1px">(none)</div>
<div class="t" style="left:619px;top:305.1px">Mon Dec 29 08:...</div>
<div class="t" style="left:699px;top:305.1px">Administrator</div>
<div class="a" style="left:255px;top:334px;width:506px;height:1px;background:#a8c8ec"></div>

<svg class="a" style="left:257px;top:320.0px" width="14" height="14" viewBox="0 0 14 14"><defs><radialGradient id="gmodel" cx="30%" cy="25%" r="80%"><stop offset="0" stop-color="#b0d4f6"/><stop offset=".45" stop-color="#4a88d0"/><stop offset="1" stop-color="#1a58a8"/></radialGradient></defs><g transform="translate(7 6.6) scale(.95 .93) translate(-7 -7)"><circle cx="7" cy="7" r="7" fill="url(#gmodel)"/><path d="M6.6 1.2 12.4 5.6 7 12.4 1.8 5.6z" fill="#e8f2fc" stroke="#fff" stroke-width="1"/><path d="M4 5.5 6.6 3 9.5 5.5 7 10" fill="none" stroke="#90b8e8" stroke-width=".9"/><circle cx="7" cy="6.5" r="1" fill="#5a90d0"/></g></svg>
<div class="t" style="left:275px;top:319.3px">Drug.gm</div>
<div class="t" style="left:353px;top:319.3px">Model</div>
<div class="tr" style="left:438px;width:60px;top:319.3px">9 KB</div>
<div class="t" style="left:502px;top:319.3px">0:2008-09-0...</div>
<div class="t" style="left:566px;top:319.3px">(none)</div>
<div class="t" style="left:619px;top:319.3px">Wed Sep 03 12:...</div>
<div class="t" style="left:699px;top:319.3px">djones</div>
<div class="a" style="left:255px;top:348px;width:506px;height:1px;background:#a8c8ec"></div>

<svg class="a" style="left:257px;top:334.2px" width="14" height="14" viewBox="0 0 14 14"><defs><radialGradient id="gmodel" cx="30%" cy="25%" r="80%"><stop offset="0" stop-color="#b0d4f6"/><stop offset=".45" stop-color="#4a88d0"/><stop offset="1" stop-color="#1a58a8"/></radialGradient></defs><g transform="translate(7 6.6) scale(.95 .93) translate(-7 -7)"><circle cx="7" cy="7" r="7" fill="url(#gmodel)"/><path d="M6.6 1.2 12.4 5.6 7 12.4 1.8 5.6z" fill="#e8f2fc" stroke="#fff" stroke-width="1"/><path d="M4 5.5 6.6 3 9.5 5.5 7 10" fill="none" stroke="#90b8e8" stroke-width=".9"/><circle cx="7" cy="6.5" r="1" fill="#5a90d0"/></g></svg>
<div class="t" style="left:275px;top:333.5px">K.gm</div>
<div class="t" style="left:353px;top:333.5px">Model</div>
<div class="tr" style="left:438px;width:60px;top:333.5px">6 KB</div>
<div class="t" style="left:502px;top:333.5px">0:2008-12-2...</div>
<div class="t" style="left:566px;top:333.5px">(none)</div>
<div class="t" style="left:619px;top:333.5px">Mon Dec 29 08:...</div>
<div class="t" style="left:699px;top:333.5px">Administrator</div>
<div class="a" style="left:255px;top:349px;width:506px;height:14px;background:#fcd98a"></div>
<div class="a" style="left:256px;top:348px;width:95px;height:15px;border:1px solid #0a18a0;border-top-width:1.5px;border-bottom-width:1.5px"></div>
<div class="a" style="left:255px;top:362px;width:506px;height:1px;background:#a8c8ec"></div>

<svg class="a" style="left:257px;top:348.4px" width="14" height="14" viewBox="0 0 14 14"><defs><radialGradient id="gstream" cx="30%" cy="25%" r="80%"><stop offset="0" stop-color="#b0d4f6"/><stop offset=".45" stop-color="#4a88d0"/><stop offset="1" stop-color="#1a58a8"/></radialGradient></defs><g transform="translate(7 6.6) scale(.95 .93) translate(-7 -7)"><circle cx="7" cy="7" r="7" fill="url(#gstream)"/><path d="M3.3 7.5V4.2Q3.3 3.3 4.2 3.3H8.8M10 1.8v5.8" stroke="#fff" fill="none" stroke-width="1.1"/><circle cx="3.5" cy="9.3" r="1.7" fill="none" stroke="#fff" stroke-width="1.1"/><path d="M10.2 7.6l1.9 1.9-1.9 1.9-1.9-1.9z" fill="none" stroke="#fff" stroke-width="1.1"/></g></svg>
<div class="t" style="left:275px;top:347.7px">modelingintro.str</div>
<div class="t" style="left:353px;top:347.7px">Stream</div>
<div class="tr" style="left:438px;width:60px;top:347.7px">4 KB</div>
<div class="t" style="left:502px;top:347.7px">1:2009-05-2...</div>
<div class="t" style="left:566px;top:347.7px">(none)</div>
<div class="t" style="left:619px;top:347.7px">Thu May 28 10:...</div>
<div class="t" style="left:699px;top:347.7px">admin</div>
<div class="a" style="left:255px;top:376px;width:506px;height:1px;background:#a8c8ec"></div>

<svg class="a" style="left:257px;top:363px" width="14" height="14"><defs><linearGradient id="gn" x1="0" y1="0" x2="1" y2="1"><stop offset="0" stop-color="#fff"/><stop offset="1" stop-color="#d8dce4"/></linearGradient></defs><path d="M3.8 1.2h6.4L13.2 6.5 10.2 11.8H3.8L.8 6.5z" fill="url(#gn)" stroke="#1a4a98" stroke-width="1.2"/></svg>
<div class="t" style="left:275px;top:361.9px">Nuage.nod</div>
<div class="t" style="left:353px;top:361.9px">Node</div>
<div class="tr" style="left:438px;width:60px;top:361.9px">2 KB</div>
<div class="t" style="left:502px;top:361.9px">0:2008-12-2...</div>
<div class="t" style="left:566px;top:361.9px">noeud</div>
<div class="t" style="left:619px;top:361.9px">Mon Dec 29 07:...</div>
<div class="t" style="left:699px;top:361.9px">Administrator</div>
<div class="a" style="left:255px;top:390px;width:506px;height:1px;background:#a8c8ec"></div>

<svg class="a" style="left:257px;top:377px" width="14" height="14"><path d="M1.5 .5h6.5l2.5 2.5v9.5h-9z" fill="#fff" stroke="#505050"/><path d="M8 .5v2.5h2.5" fill="#f8ecc8" stroke="#707070"/><path d="M9.8 4v8" stroke="#f4dc9c"/></svg>
<div class="t" style="left:275px;top:376.1px">operation1.xml</div>
<div class="t" style="left:353px;top:376.1px">Object</div>
<div class="tr" style="left:438px;width:60px;top:376.1px">1 KB</div>
<div class="t" style="left:502px;top:376.1px">0:2008-10-2...</div>
<div class="t" style="left:566px;top:376.1px">(none)</div>
<div class="t" style="left:619px;top:376.1px">Mon Oct 27 07:...</div>
<div class="t" style="left:699px;top:376.1px">admin</div>
<div class="a" style="left:255px;top:405px;width:506px;height:1px;background:#a8c8ec"></div>

<svg class="a" style="left:257px;top:391px" width="14" height="14"><defs><linearGradient id="gn" x1="0" y1="0" x2="1" y2="1"><stop offset="0" stop-color="#fff"/><stop offset="1" stop-color="#d8dce4"/></linearGradient></defs><path d="M3.8 1.2h6.4L13.2 6.5 10.2 11.8H3.8L.8 6.5z" fill="url(#gn)" stroke="#1a4a98" stroke-width="1.2"/></svg>
<div class="t" style="left:275px;top:390.3px">source.nod</div>
<div class="t" style="left:353px;top:390.3px">Node</div>
<div class="tr" style="left:438px;width:60px;top:390.3px">1 KB</div>
<div class="t" style="left:502px;top:390.3px">0:2008-12-2...</div>
<div class="t" style="left:566px;top:390.3px">(none)</div>
<div class="t" style="left:619px;top:390.3px">Fri Dec 26 10:4...</div>
<div class="t" style="left:699px;top:390.3px">Administrator</div>
<div class="a" style="left:255px;top:419px;width:506px;height:1px;background:#a8c8ec"></div>

<svg class="a" style="left:257px;top:405.2px" width="14" height="14" viewBox="0 0 14 14"><defs><radialGradient id="goutput" cx="30%" cy="25%" r="80%"><stop offset="0" stop-color="#b0d4f6"/><stop offset=".45" stop-color="#4a88d0"/><stop offset="1" stop-color="#1a58a8"/></radialGradient></defs><g transform="translate(7 6.6) scale(.95 .93) translate(-7 -7)"><circle cx="7" cy="7" r="7" fill="url(#goutput)"/><path d="M5.5 .8 9.3 4 5.5 7.5 1.8 4z" fill="#fff" fill-opacity=".85"/><rect x="5.5" y="5.5" width="5.5" height="6.5" fill="#a8c8ec" stroke="#e8f2fc" stroke-width=".8"/><path d="M9.8 6v5.5" stroke="#2a68b8" stroke-width="1.2"/><path d="M6.5 7.5h2M6.5 9.5h1.5" stroke="#fff" stroke-width=".8"/></g></svg>
<div class="t" style="left:275px;top:404.5px">store_play.cou</div>
<div class="t" style="left:353px;top:404.5px">Output</div>
<div class="tr" style="left:438px;width:60px;top:404.5px">4 KB</div>
<div class="t" style="left:502px;top:404.5px">0:2009-02-2...</div>
<div class="t" style="left:566px;top:404.5px">(none)</div>
<div class="t" style="left:619px;top:404.5px">Wed Feb 25 10:...</div>
<div class="t" style="left:699px;top:404.5px">djones</div>
<div class="a" style="left:255px;top:433px;width:506px;height:1px;background:#a8c8ec"></div>

<svg class="a" style="left:257px;top:419px" width="14" height="14"><path d="M1.5 .5h6.5l2.5 2.5v9.5h-9z" fill="#fff" stroke="#505050"/><path d="M8 .5v2.5h2.5" fill="#f8ecc8" stroke="#707070"/><path d="M9.8 4v8" stroke="#f4dc9c"/></svg>
<div class="t" style="left:275px;top:418.7px">Stream1.scn</div>
<div class="t" style="left:353px;top:418.7px">Object</div>
<div class="tr" style="left:438px;width:60px;top:418.7px">14 KB</div>
<div class="t" style="left:502px;top:418.7px">1:2009-04-1...</div>
<div class="t" style="left:566px;top:418.7px">(none)</div>
<div class="t" style="left:619px;top:418.7px">Mon Apr 20 04:...</div>
<div class="t" style="left:699px;top:418.7px">admin</div>
<div class="a" style="left:255px;top:447px;width:506px;height:1px;background:#a8c8ec"></div>

<svg class="a" style="left:257px;top:433.6px" width="14" height="14" viewBox="0 0 14 14"><defs><radialGradient id="gstream" cx="30%" cy="25%" r="80%"><stop offset="0" stop-color="#b0d4f6"/><stop offset=".45" stop-color="#4a88d0"/><stop offset="1" stop-color="#1a58a8"/></radialGradient></defs><g transform="translate(7 6.6) scale(.95 .93) translate(-7 -7)"><circle cx="7" cy="7" r="7" fill="url(#gstream)"/><path d="M3.3 7.5V4.2Q3.3 3.3 4.2 3.3H8.8M10 1.8v5.8" stroke="#fff" fill="none" stroke-width="1.1"/><circle cx="3.5" cy="9.3" r="1.7" fill="none" stroke="#fff" stroke-width="1.1"/><path d="M10.2 7.6l1.9 1.9-1.9 1.9-1.9-1.9z" fill="none" stroke="#fff" stroke-width="1.1"/></g></svg>
<div class="t" style="left:275px;top:432.9px">Stream2.str</div>
<div class="t" style="left:353px;top:432.9px">Stream</div>
<div class="tr" style="left:438px;width:60px;top:432.9px">2 KB</div>
<div class="t" style="left:502px;top:432.9px">0:2009-06-2...</div>
<div class="t" style="left:566px;top:432.9px">(none)</div>
<div class="t" style="left:619px;top:432.9px">Tue Jun 23 02:2...</div>
<div class="t" style="left:699px;top:432.9px">hyuan</div>
<div class="a" style="left:255px;top:462px;width:506px;height:1px;background:#a8c8ec"></div>

<svg class="a" style="left:257px;top:448px" width="14" height="14"><path d="M1.5 .5h6.5l2.5 2.5v9.5h-9z" fill="#fff" stroke="#505050"/><path d="M8 .5v2.5h2.5" fill="#f8ecc8" stroke="#707070"/><path d="M9.8 4v8" stroke="#f4dc9c"/></svg>
<div class="t" style="left:275px;top:447.1px">sunnior111111 ...</div>
<div class="t" style="left:353px;top:447.1px">Object</div>
<div class="tr" style="left:438px;width:60px;top:447.1px">2 KB</div>
<div class="t" style="left:502px;top:447.1px">1:2008-12-1...</div>
<div class="t" style="left:566px;top:447.1px">(none)</div>
<div class="t" style="left:619px;top:447.1px">Fri Dec 12 10:2...</div>
<div class="t" style="left:699px;top:447.1px">admin</div>
<div class="a" style="left:255px;top:476px;width:506px;height:1px;background:#a8c8ec"></div>

<svg class="a" style="left:257px;top:462.0px" width="14" height="14" viewBox="0 0 14 14"><defs><radialGradient id="goutput" cx="30%" cy="25%" r="80%"><stop offset="0" stop-color="#b0d4f6"/><stop offset=".45" stop-color="#4a88d0"/><stop offset="1" stop-color="#1a58a8"/></radialGradient></defs><g transform="translate(7 6.6) scale(.95 .93) translate(-7 -7)"><circle cx="7" cy="7" r="7" fill="url(#goutput)"/><path d="M5.5 .8 9.3 4 5.5 7.5 1.8 4z" fill="#fff" fill-opacity=".85"/><rect x="5.5" y="5.5" width="5.5" height="6.5" fill="#a8c8ec" stroke="#e8f2fc" stroke-width=".8"/><path d="M9.8 6v5.5" stroke="#2a68b8" stroke-width="1.2"/><path d="M6.5 7.5h2M6.5 9.5h1.5" stroke="#fff" stroke-width=".8"/></g></svg>
<div class="t" style="left:275px;top:461.3px">Table_Labels.cou</div>
<div class="t" style="left:353px;top:461.3px">Output</div>
<div class="tr" style="left:438px;width:60px;top:461.3px">20 KB</div>
<div class="t" style="left:502px;top:461.3px">0:2008-12-0...</div>
<div class="t" style="left:566px;top:461.3px">example, ...</div>
<div class="t" style="left:619px;top:461.3px">Fri Dec 05 06:5...</div>
<div class="t" style="left:699px;top:461.3px">user</div>
<div class="a" style="left:255px;top:490px;width:506px;height:1px;background:#a8c8ec"></div>

<svg class="a" style="left:257px;top:476px" width="14" height="14"><path d="M1.5 .5h6.5l2.5 2.5v9.5h-9z" fill="#fff" stroke="#505050"/><path d="M8 .5v2.5h2.5" fill="#f8ecc8" stroke="#707070"/><path d="M9.8 4v8" stroke="#f4dc9c"/></svg>
<div class="t" style="left:275px;top:475.5px">test2</div>
<div class="t" style="left:353px;top:475.5px">Object</div>
<div class="tr" style="left:438px;width:60px;top:475.5px">2 KB</div>
<div class="t" style="left:502px;top:475.5px">3:2009-03-0...</div>
<div class="t" style="left:566px;top:475.5px">(none)</div>
<div class="t" style="left:619px;top:475.5px">Thu Mar 05 22:1...</div>
<div class="t" style="left:699px;top:475.5px">admin</div>
<div class="a" style="left:255px;top:504px;width:506px;height:1px;background:#a8c8ec"></div>

<svg class="a" style="left:257px;top:490px" width="14" height="14"><path d="M1.5 .5h6.5l2.5 2.5v9.5h-9z" fill="#fff" stroke="#505050"/><path d="M8 .5v2.5h2.5" fill="#f8ecc8" stroke="#707070"/><path d="M9.8 4v8" stroke="#f4dc9c"/></svg>
<div class="t" style="left:275px;top:489.7px">test_b</div>
<div class="t" style="left:353px;top:489.7px">Object</div>
<div class="t" style="left:502px;top:489.7px">0:2009-03-0...</div>
<div class="t" style="left:566px;top:489.7px">(none)</div>
<div class="t" style="left:619px;top:489.7px">Fri Mar 06 00:13...</div>
<div class="t" style="left:699px;top:489.7px">admin</div>
<div class="a" style="left:255px;top:518px;width:506px;height:1px;background:#a8c8ec"></div>

<svg class="a" style="left:257px;top:505px" width="14" height="14"><path d="M1.5 .5h6.5l2.5 2.5v9.5h-9z" fill="#fff" stroke="#505050"/><path d="M8 .5v2.5h2.5" fill="#f8ecc8" stroke="#707070"/><path d="M9.8 4v8" stroke="#f4dc9c"/></svg>
<div class="t" style="left:275px;top:503.9px">testsaveasopti...</div>
<div class="t" style="left:353px;top:503.9px">Object</div>
<div class="tr" style="left:438px;width:60px;top:503.9px">3 KB</div>
<div class="t" style="left:502px;top:503.9px">1:2008-11-2...</div>
<div class="t" style="left:566px;top:503.9px">(none)</div>
<div class="t" style="left:619px;top:503.9px">Fri Nov 21 22:2...</div>
<div class="t" style="left:699px;top:503.9px">admin</div>
<div class="a" style="left:255px;top:532px;width:506px;height:1px;background:#a8c8ec"></div>

<svg class="a" style="left:257px;top:518.8px" width="14" height="14" viewBox="0 0 14 14"><defs><radialGradient id="gmodel" cx="30%" cy="25%" r="80%"><stop offset="0" stop-color="#b0d4f6"/><stop offset=".45" stop-color="#4a88d0"/><stop offset="1" stop-color="#1a58a8"/></radialGradient></defs><g transform="translate(7 6.6) scale(.95 .93) translate(-7 -7)"><circle cx="7" cy="7" r="7" fill="url(#gmodel)"/><path d="M6.6 1.2 12.4 5.6 7 12.4 1.8 5.6z" fill="#e8f2fc" stroke="#fff" stroke-width="1"/><path d="M4 5.5 6.6 3 9.5 5.5 7 10" fill="none" stroke="#90b8e8" stroke-width=".9"/><circle cx="7" cy="6.5" r="1" fill="#5a90d0"/></g></svg>
<div class="t" style="left:275px;top:518.1px">WATERTREAT....</div>
<div class="t" style="left:353px;top:518.1px">Model</div>
<div class="tr" style="left:438px;width:60px;top:518.1px">90 KB</div>
<div class="t" style="left:502px;top:518.1px">0:2008-12-2...</div>
<div class="t" style="left:566px;top:518.1px">(none)</div>
<div class="t" style="left:619px;top:518.1px">Mon Dec 29 07:...</div>
<div class="t" style="left:699px;top:518.1px">Administrator</div>
<div class="a" style="left:351px;top:235px;width:1px;height:298px;background:#a8c8ec"></div>
<div class="a" style="left:447px;top:235px;width:1px;height:298px;background:#a8c8ec"></div>
<div class="a" style="left:500px;top:235px;width:1px;height:298px;background:#a8c8ec"></div>
<div class="a" style="left:564px;top:235px;width:1px;height:298px;background:#a8c8ec"></div>
<div class="a" style="left:617px;top:235px;width:1px;height:298px;background:#a8c8ec"></div>
<div class="a" style="left:697px;top:235px;width:1px;height:298px;background:#a8c8ec"></div>
<div class="a" style="left:761px;top:235px;width:1px;height:298px;background:#a8c8ec"></div>
<div class="a" style="left:250px;top:587px;width:583px;height:3px;background:#8cc0f0"></div>
<div class="a" style="left:537px;top:587px;width:0;height:0;border-top:2.5px solid transparent;border-bottom:2.5px solid transparent;border-left:3px solid #1a3a90"></div>
<div class="a" style="left:541px;top:587px;width:0;height:0;border-top:2.5px solid transparent;border-bottom:2.5px solid transparent;border-left:3px solid #1a3a90"></div>
<div class="a" style="left:545px;top:587px;width:0;height:0;border-top:2.5px solid transparent;border-bottom:2.5px solid transparent;border-left:3px solid #1a3a90"></div>
<div class="a" style="left:254px;top:585px;width:0;height:0;border-left:3px solid transparent;border-right:3px solid transparent;border-bottom:4px solid #a0a0a8"></div>
<div class="a" style="left:262px;top:588px;width:0;height:0;border-left:4px solid transparent;border-right:4px solid transparent;border-top:4px solid #404048"></div>
<div class="a" style="left:254px;top:591px;width:575px;height:95px;border:1px solid #6a9ad8;border-top:1px solid #1a5ab8"></div>
<div class="t ti" style="left:255px;top:592.8px">Information for selected version:</div>
<div class="t ti" style="left:255px;top:606.0px">Name: modelingintro.str</div>
<div class="t ti" style="left:255px;top:619.3px">Version: 1:2009-05-28 04:21:15.478</div>
<div class="t ti" style="left:255px;top:632.5px">Labels: (none)</div>
<div class="t ti" style="left:255px;top:645.8px">Created By: admin</div>
<div class="t ti" style="left:255px;top:659.0px">Creation Date: May 28, 2009</div>
<div class="t ti" style="left:255px;top:672.3px">Keywords:</div>
<div class="a" style="left:813px;top:593px;width:14px;height:91px;border:1px solid #2a80e8;background:#d0d0da"></div>
<div class="a" style="left:814px;top:594px;width:12px;height:12px;background:#a8ccf8"></div>
<div class="a" style="left:816px;top:598px;width:0;height:0;border-left:4px solid transparent;border-right:4px solid transparent;border-bottom:4px solid #686870"></div>
<div class="a" style="left:814px;top:606px;width:12px;height:47px;background:linear-gradient(90deg,#a8c8ee,#5a94d8 50%,#3a74c0)"></div>
<div class="a" style="left:814px;top:653px;width:12px;height:17px;background:linear-gradient(90deg,#c8c8d4,#e8e8f0 50%,#c0c0cc)"></div>
<div class="a" style="left:814px;top:670px;width:12px;height:13px;background:#a8ccf8"></div>
<div class="a" style="left:816px;top:675px;width:0;height:0;border-left:4px solid transparent;border-right:4px solid transparent;border-top:4px solid #686870"></div>
<div class="a" style="left:101px;top:690px;width:732px;height:3px;background:#8888a0"></div>
</body></html>
